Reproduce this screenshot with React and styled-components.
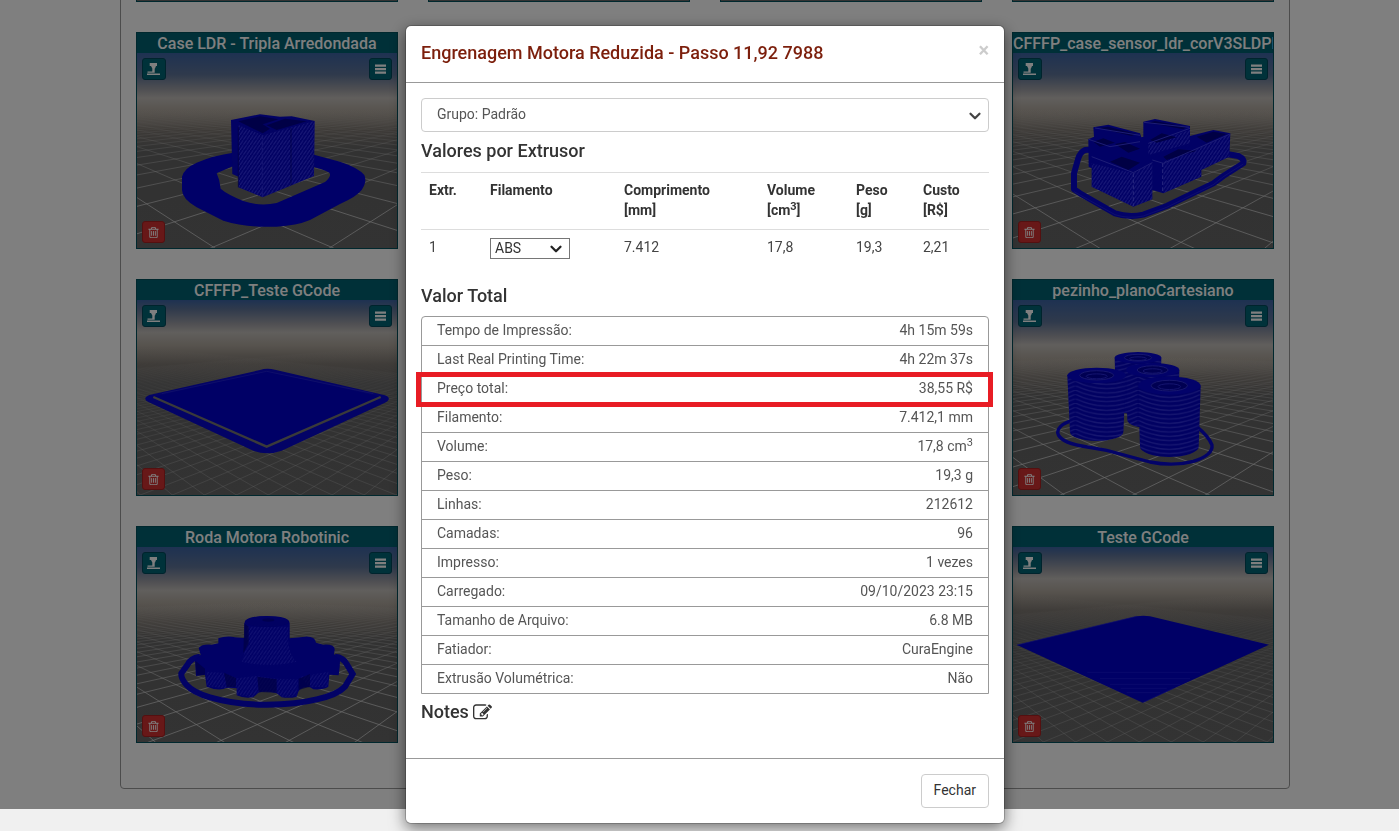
import React from "react";
import styled, { createGlobalStyle } from "styled-components";
import { ChevronDown } from "lucide-react";

const GlobalStyle = createGlobalStyle`
  *, *::before, *::after { box-sizing: border-box; }
  html, body { margin: 0; background: #f0f0f0; }
  body {
    font-family: Roboto, "Liberation Sans", sans-serif;
    font-size: 14px;
    line-height: 20px;
    color: #333;
    overflow: hidden;
  }
`;

/* ---------- library page ---------- */

const Library = styled.main`
  display: flex;
  flex-direction: column;
  justify-content: flex-end;
  align-items: center;
  height: calc(100vh - 22px);
  padding: 0 0 20px 11px;
  overflow: hidden;
  background: #fff;
`;

const Panel = styled.section`
  width: 100%;
  max-width: 1170px;
  padding: 0 15px 45px;
  border: 1px solid #999;
  border-radius: 4px;
`;

const CardGrid = styled.div`
  display: grid;
  grid-template-columns: repeat(4, 1fr);
  gap: 30px;
`;

const Card = styled.article`
  position: relative;
  grid-column: ${(p) => p.$column};
  display: flex;
  flex-direction: column;
  height: 217px;
  overflow: hidden;
  border: 1px solid #00505c;
  background: #666;
`;

const CardTitle = styled.h3`
  flex: none;
  margin: 0;
  height: 20px;
  overflow: hidden;
  background: #006070;
  color: #fff;
  font-size: 16px;
  font-weight: 500;
  line-height: 22px;
  text-align: center;
  white-space: nowrap;
`;

const SceneSvg = styled.svg`
  display: block;
  flex: 1;
  width: 100%;
  min-height: 0;
`;

const CardButton = styled.button`
  position: absolute;
  display: flex;
  align-items: center;
  justify-content: center;
  width: ${(p) => (p.$wide ? 24 : 23)}px;
  height: 22px;
  padding: 0;
  border: 1px solid ${(p) => (p.$danger ? "#a82020" : "#00485a")};
  border-radius: 3px;
  background: ${(p) => (p.$danger ? "#d03030" : "#006474")};
  color: #fff;
  ${(p) => (p.$bottom ? "bottom: 5px;" : "top: 25px;")}
  ${(p) => (p.$right ? "right: 5px;" : "left: 5px;")}
`;

const PrinterIcon = () => (
  <svg width="14" height="14" viewBox="0 0 14 14" fill="currentColor" aria-hidden="true">
    <path d="M2.700 1H10V4H9L8 6.500H7.700V10.800H0.500V9.500H5.300V6.500L4 4H2.700ZM0 11.400H13V13H0Z" />
  </svg>
);

const BarsIcon = () => (
  <svg width="13" height="12" viewBox="0 0 13 12" fill="currentColor" aria-hidden="true">
    <path d="M1 1.500h11v2.200H1zM1 5h11v2.200H1zM1 8.500h11v2.200H1z" />
  </svg>
);

const TrashIcon = () => (
  <svg width="13" height="13" viewBox="0 0 1792 1792" fill="currentColor" aria-hidden="true">
    <path d="M704 736v576q0 14-9 23t-23 9h-64q-14 0-23-9t-9-23v-576q0-14 9-23t23-9h64q14 0 23 9t9 23zm256 0v576q0 14-9 23t-23 9h-64q-14 0-23-9t-9-23v-576q0-14 9-23t23-9h64q14 0 23 9t9 23zm256 0v576q0 14-9 23t-23 9h-64q-14 0-23-9t-9-23v-576q0-14 9-23t23-9h64q14 0 23 9t9 23zm128 724v-948h-896v948q0 22 7 40.500t14.500 27 10.500 8.500h832q3 0 10.500-8.500t14.500-27 7-40.500zm-672-1076h448l-48-117q-7-9-17-11h-317q-10 2-17 11zm928 32v64q0 14-9 23t-23 9h-96v948q0 83-47 143.500t-113 60.500h-832q-66 0-113-58.500t-47-141.500v-952h-96q-14 0-23-9t-9-23v-64q0-14 9-23t23-9h309l70-167q15-37 54-63t79-26h320q40 0 79 26t54 63l70 167h309q14 0 23 9t9 23z" />
  </svg>
);

const EditIcon = () => (
  <svg width="19" height="19" viewBox="0 0 1792 1792" fill="currentColor" aria-hidden="true">
    <path d="M888 1184l116-116-152-152-116 116v56h96v96h56zm440-720q-16-16-33 1l-350 350q-17 17-1 33t33-1l350-350q17-17 1-33zm80 594v190q0 119-84.500 203.500t-203.500 84.500h-832q-119 0-203.500-84.500t-84.500-203.500v-832q0-119 84.500-203.500t203.500-84.500h832q63 0 117 25 15 7 18 23 3 17-9 29l-49 49q-14 14-32 8-23-6-45-6h-832q-66 0-113 47t-47 113v832q0 66 47 113t113 47h832q66 0 113-47t47-113v-126q0-13 9-22l64-64q15-15 35-7t20 29zm-96-738l288 288-672 672h-288v-288zm444 132l-92 92-288-288 92-92q28-28 68-28t68 28l152 152q28 28 28 68t-28 68z" />
  </svg>
);

/* Print bed: sky gradient and a grid running to two vanishing points. */
function Scene({ id, horizon = 130, step = 300, anchor = 0, base = 585, children }) {
  const fine = step < 150;
  const lines = [];
  for (let k = -45; k <= 45; k += 1) {
    const x = anchor + k * step;
    [-470, 1290].forEach((vx) => {
      const far = 1.8;
      lines.push(`M${vx} ${horizon}L${vx + (x - vx) * far} ${horizon + (base - horizon) * far}`);
    });
  }
  const at = (px) => (horizon + px) / 585;
  return (
    <SceneSvg viewBox="0 0 780 585" preserveAspectRatio="xMidYMid slice" role="img" aria-label="Modelo">
      <defs>
        <linearGradient id={`${id}-sky`} x1="0" y1="0" x2="0" y2="1">
          <stop offset="0" stopColor="#3c64a4" />
          <stop offset={at(-65)} stopColor="#5f7498" />
          <stop offset={at(-20)} stopColor="#a0a0a6" />
          <stop offset={at(5)} stopColor="#c2beba" />
          <stop offset={at(45)} stopColor="#aea69c" />
          <stop offset={at(100)} stopColor="#7c7670" />
          <stop offset={at(160)} stopColor="#646464" />
          <stop offset="1" stopColor="#666" />
        </linearGradient>
        <linearGradient id={`${id}-fade`} gradientUnits="userSpaceOnUse" x1="0" y1={horizon} x2="0" y2="585">
          <stop offset="0.08" stopColor="#c8c4c0" stopOpacity="0" />
          <stop offset="0.35" stopColor="#d0d0d0" stopOpacity={fine ? 0.14 : 0.3} />
          <stop offset="0.75" stopColor="#d8d8d8" stopOpacity={fine ? 0.4 : 0.7} />
        </linearGradient>
        <pattern id={`${id}-diag`} width="10" height="15" patternUnits="userSpaceOnUse">
          <path d="M0 15L10 0" stroke="#4848ff" strokeWidth="3" />
        </pattern>
        <pattern id={`${id}-wave`} width="188" height="13" x="414" patternUnits="userSpaceOnUse">
          <path
            d="M0 -26Q94 18 188 -26M0 -13Q94 31 188 -13M0 0Q94 44 188 0M0 -39Q94 5 188 -39"
            stroke="#4a4af4"
            strokeWidth="4"
            fill="none"
          />
        </pattern>
      </defs>
      <rect width="780" height="585" fill={`url(#${id}-sky)`} />
      <path d={lines.join("")} stroke={`url(#${id}-fade)`} strokeWidth={fine ? 2 : 3} fill="none" />
      {children}
    </SceneSvg>
  );
}

const BoxScene = () => (
  <Scene id="box" horizon={130} step={353} anchor={229} base={582}>
    <g transform="translate(-81 -159)">
      <path
        fill="#0000d0"
        fillRule="evenodd"
        d="M216 530Q222 505 260 488Q310 466 370 458L612 464L690 485Q745 503 763 525Q772 545 755 570Q740 590 690 612L600 660Q560 677 500 680H450Q390 678 340 662L260 622Q216 596 216 570ZM320 520L370 498H600Q640 508 658 518Q666 528 645 546L500 609Q450 620 400 603Q350 582 332 566Q330 540 320 520Z"
      />
      <path fill="#0404c8" d="M363 360L450 343L510 350L545 349L614 363L612 528L458 592L385 562V530L367 522Z" />
      <path fill="url(#box-diag)" opacity=".7" d="M385 375L458 406L614 363L612 528L458 592L385 562Z" />
      <path fill="#00008c" d="M385 364L450 349L505 358L458 373L480 386L458 400ZM470 376L525 356L590 364L500 390Z" />
      <path stroke="#2c2ce8" strokeWidth="3" strokeDasharray="12 7" d="M457 406V590" />
      <path stroke="#000080" strokeWidth="2" d="M543 384V555M385 380V562" />
    </g>
  </Scene>
);

const BlocksScene = () => (
  <Scene id="blocks" horizon={130} step={272} anchor={232} base={568}>
    <g transform="translate(-39 -159)">
      <path
        fill="none"
        stroke="#0505d0"
        strokeWidth="18"
        strokeLinejoin="round"
        d="M290 448L255 450Q240 456 234 478L222 520V568L240 580L345 640Q385 653 430 644L500 618L640 550L670 528L730 490Q735 478 715 468L680 462"
      />
      <path fill="none" stroke="#4040f0" strokeWidth="2" opacity=".6" d="M222 575L345 644Q385 657 430 648L500 622L640 554L670 530L730 492" />
      <path
        fill="#0303cc"
        d="M280 382L325 374L420 400L424 412L430 410V365L465 357L570 378V408L640 390L691 400L688 470L604 510V530L490 580L457 570V598L400 620L275 560V505L266 500L265 418L282 410Z"
      />
      <path fill="url(#blocks-diag)" opacity=".7" d="M400 520L457 490V598L400 620ZM490 485L604 440V530L490 580ZM275 490L400 520V620L275 560ZM604 440L690 402L688 470L604 510ZM445 430L570 390V430L445 465Z" />
      <path fill="#000088" d="M295 384L325 380L410 402L395 408ZM445 368L465 363L560 380L550 388ZM590 410L640 395L680 402L620 428ZM345 432L375 426L420 446L385 458ZM280 425L310 415L345 428L300 440ZM330 485L365 470L420 488L385 510ZM450 420L485 400L530 412L470 428ZM490 470L535 448L590 452L500 480Z" />
      <path stroke="#3a3aee" strokeWidth="3" fill="none" d="M266 418L330 440L420 425M275 470L400 518L457 488M445 430L570 385M457 480L490 490L690 402M285 384L420 406M432 367L568 382" />
      <path stroke="#5050ff" strokeWidth="3" strokeDasharray="11 7" d="M400 520V618M488 490V578" />
    </g>
  </Scene>
);

const PlateScene = () => (
  <Scene id="plate" horizon={92} step={96} anchor={10}>
    <g transform="translate(-81 -120)">
      <path fill="#0606cc" d="M450 330Q470 323 495 329L825 406Q848 415 825 428L515 572Q470 588 430 572L115 426Q95 415 118 405Z" />
      <path fill="#0000cc" d="M470 333L810 410L470 556L132 410Z" />
      <path fill="none" stroke="#747474" strokeWidth="7" d="M130 411L470 560L812 411" />
      <path fill="none" stroke="#2828da" strokeWidth="2" d="M155 401L470 334L790 401" />
    </g>
  </Scene>
);

const CylinderShape = ({ x, y, rx, ry, height, lean = 4 }) => {
  const body = `M${x - rx} ${y}L${x - rx + lean} ${y + height}A${rx - lean} ${ry + 4} 0 0 0 ${x + rx - lean} ${y + height}L${x + rx} ${y}Z`;
  return (
    <g>
      <path d={body} fill="#0202c4" />
      <path d={body} fill="url(#feet-wave)" opacity=".6" />
      <ellipse cx={x} cy={y} rx={rx} ry={ry} fill="#0404d4" />
      <ellipse cx={x} cy={y} rx={rx * 0.58} ry={ry * 0.6} fill="#0000a4" stroke="#3030e0" strokeWidth="3" />
      <ellipse cx={x} cy={y + 3} rx={rx * 0.36} ry={ry * 0.32} fill="none" stroke="#2a2ae0" strokeWidth="3" />
    </g>
  );
};

const FeetScene = () => (
  <Scene id="feet" horizon={130} step={216} anchor={150} base={582}>
    <g transform="translate(-39 -120)">
      <path fill="none" stroke="#0606d0" strokeWidth="10" d="M230 478Q175 490 173 518Q178 546 245 558L320 571L450 606Q520 620 580 604Q640 585 636 555Q625 528 590 500" />
      <CylinderShape x={414} y={293} rx={70} ry={17} height={150} />
      <CylinderShape x={458} y={330} rx={80} ry={21} height={150} />
      <CylinderShape x={290} y={346} rx={88} ry={23} height={170} lean={8} />
      <CylinderShape x={508} y={377} rx={94} ry={27} height={183} lean={6} />
    </g>
  </Scene>
);

const GearScene = () => (
  <Scene id="gear" horizon={125} step={204} anchor={49} base={580}>
    <g transform="translate(-81 -111)">
      <path
        fill="none"
        stroke="#0404cc"
        strokeWidth="18"
        d="M270 440Q240 445 232 465L214 490Q212 505 230 525Q250 548 300 562Q380 585 470 584Q560 583 620 568Q680 556 705 530L728 492L710 462Q700 442 675 440"
      />
      <path
        fill="#0202cc"
        d="M403 340Q405 318 471 318Q537 318 539 340V385L585 380Q615 378 618 398L640 404Q676 402 674 420L672 432L690 452Q690 470 686 496L658 494L655 530Q640 540 610 538L600 532Q575 528 565 545L560 560Q540 566 515 562L500 550Q470 540 445 548L430 562Q400 566 380 556V535Q350 530 340 537Q320 542 290 530L285 494L258 498L255 450L272 434L266 414Q275 402 305 404L325 400V385Q350 376 375 382L403 384Z"
      />
      <path fill="url(#gear-diag)" opacity=".45" d="M410 350H535V400Q540 440 560 455Q470 475 395 455Q408 420 410 395ZM290 486L340 488L380 505V530L340 535L290 528ZM380 505L440 498L500 506L565 508L560 558L515 562L500 548L445 546L430 562L380 554ZM570 500L655 485V530L600 532Z" />
      <path fill="#000084" opacity=".7" d="M342 488L378 504V530L350 532ZM442 500L500 508V548L446 546ZM566 506L600 492V530L566 540ZM256 452L285 476V494L260 496ZM403 340L416 350V400L400 430Z" />
      <ellipse cx="471" cy="335" rx="66" ry="16" fill="#0202c4" />
      <ellipse cx="475" cy="330" rx="18" ry="5" fill="#0000a0" />
    </g>
  </Scene>
);

const SquareScene = () => (
  <Scene id="square" horizon={90} step={96} anchor={-5}>
    <g transform="translate(-39 -111)">
      <path fill="#0000cc" d="M410 319Q430 315 450 319L807 404L428 578L51 405Z" />
      <path stroke="#1c1cde" strokeWidth="2" fill="none" d="M262 487H600M300 506H570M330 523H540M362 535H500M380 548H480M51 405L410 319M430 577L520 535" />
    </g>
  </Scene>
);

const models = [
  { title: "Case LDR - Tripla Arredondada", column: 1, View: BoxScene },
  { title: "CFFFP_case_sensor_ldr_corV3SLDPRT", column: 4, View: BlocksScene },
  { title: "CFFFP_Teste GCode", column: 1, View: PlateScene },
  { title: "pezinho_planoCartesiano", column: 4, View: FeetScene },
  { title: "Roda Motora Robotinic", column: 1, View: GearScene },
  { title: "Teste GCode", column: 4, View: SquareScene },
];

const ModelCard = ({ title, column, View }) => (
  <Card $column={column}>
    <CardTitle>{title}</CardTitle>
    <View />
    <CardButton type="button" $wide aria-label="Imprimir"><PrinterIcon /></CardButton>
    <CardButton type="button" $right aria-label="Menu"><BarsIcon /></CardButton>
    <CardButton type="button" $danger $bottom aria-label="Excluir"><TrashIcon /></CardButton>
  </Card>
);

/* ---------- modal ---------- */

const Backdrop = styled.div`
  position: fixed;
  inset: 0 0 22px;
  background: rgba(0, 0, 0, 0.5);
`;

const ModalLayer = styled.div`
  position: fixed;
  inset: 0;
  display: flex;
  justify-content: center;
  align-items: flex-start;
  padding: 25px 0 0 11px;
`;

const Dialog = styled.div`
  width: 100%;
  max-width: 600px;
  border: 1px solid rgba(0, 0, 0, 0.2);
  border-radius: 6px;
  background: #fff;
  background-clip: padding-box;
  box-shadow: 0 5px 15px rgba(0, 0, 0, 0.5);
`;

const DialogHeader = styled.header`
  display: flex;
  justify-content: space-between;
  align-items: flex-start;
  padding: 15px 15px 17px;
  border-bottom: 1px solid #999;
`;

const DialogTitle = styled.h2`
  margin: 0;
  color: #7c1f0c;
  font-size: 18px;
  font-weight: 500;
  line-height: 24px;
`;

const CloseButton = styled.button`
  padding: 0;
  border: 0;
  background: none;
  color: #ccc;
  font: 700 20px/18px Roboto, sans-serif;
`;

const DialogBody = styled.div`
  padding: 15px 15px 25px;
`;

const SectionTitle = styled.h3`
  display: flex;
  align-items: center;
  gap: 4px;
  margin: ${(p) => p.$top || 8}px 0 ${(p) => p.$bottom || 10}px;
  color: #333;
  font-size: 18px;
  font-weight: 500;
  line-height: 22px;
`;

const SelectBox = styled.div`
  position: relative;
  width: ${(p) => (p.$small ? "80px" : "100%")};

  svg {
    position: absolute;
    top: 50%;
    right: 5px;
    margin-top: ${(p) => (p.$small ? -9 : -8)}px;
    pointer-events: none;
  }
`;

const SelectInput = styled.select`
  display: block;
  appearance: none;
  width: 100%;
  height: ${(p) => (p.$small ? 21 : 34)}px;
  padding: ${(p) => (p.$small ? "0 4px 2px" : "0 15px 2px")};
  border: 1px solid ${(p) => (p.$small ? "#767676" : "#ccc")};
  border-radius: ${(p) => (p.$small ? 0 : 4)}px;
  background: #fff;
  color: ${(p) => (p.$small ? "#333" : "#555")};
  font: 400 14px/18px Roboto, sans-serif;
`;

const ExtruderTable = styled.table`
  width: 100%;
  border-collapse: collapse;
  table-layout: fixed;

  th, td {
    padding: 7px 8px 9px;
    border-top: 1px solid #ddd;
    text-align: left;
    vertical-align: top;
  }
  th { font-weight: 700; }
  td { color: #444; }
  td > div { margin-top: 1px; }
  sup { font-size: 11px; line-height: 0; vertical-align: 5px; }
`;

const Totals = styled.dl`
  margin: 0;
  border: 1px solid #999;
  border-radius: 4px 4px 0 0;
`;

const TotalRow = styled.div`
  position: relative;
  z-index: ${(p) => (p.$marked ? 1 : 0)};
  display: flex;
  justify-content: space-between;
  padding: 3px 15px 5px;
  color: #555;

  &:not(:first-child) { border-top: 1px solid #999; }

  dt, dd { margin: 0; }
  sup { font-size: 11px; line-height: 0; vertical-align: 5px; }
`;

const Highlight = styled.span`
  position: absolute;
  inset: -3px -5px -4px -6px;
  border: 5px solid #e81c24;
  pointer-events: none;
`;

const DialogFooter = styled.footer`
  display: flex;
  justify-content: flex-end;
  padding: 15px;
  border-top: 1px solid #999;
`;

const FooterButton = styled.button`
  height: 34px;
  padding: 0 12px 2px;
  border: 1px solid #ccc;
  border-radius: 4px;
  background: #fff;
  color: #333;
  font: 400 14px/20px Roboto, sans-serif;
`;

const totals = [
  ["Tempo de Impressão:", "4h 15m 59s"],
  ["Last Real Printing Time:", "4h 22m 37s"],
  ["Preço total:", "38,55 R$", true],
  ["Filamento:", "7.412,1 mm"],
  ["Volume:", <>17,8 cm<sup>3</sup></>],
  ["Peso:", "19,3 g"],
  ["Linhas:", "212612"],
  ["Camadas:", "96"],
  ["Impresso:", "1 vezes"],
  ["Carregado:", "09/10/2023 23:15"],
  ["Tamanho de Arquivo:", "6.8 MB"],
  ["Fatiador:", "CuraEngine"],
  ["Extrusão Volumétrica:", "Não"],
];

export default function App() {
  return (
    <>
      <GlobalStyle />
      <Library>
        <Panel>
          <CardGrid>
            {[1, 2, 3, 4].map((column) => (
              <Card key={column} $column={column} />
            ))}
            {models.map((model) => (
              <ModelCard key={model.title} {...model} />
            ))}
          </CardGrid>
        </Panel>
      </Library>
      <Backdrop />
      <ModalLayer>
        <Dialog role="dialog" aria-modal="true" aria-labelledby="dialog-title">
          <DialogHeader>
            <DialogTitle id="dialog-title">Engrenagem Motora Reduzida - Passo 11,92 7988</DialogTitle>
            <CloseButton type="button" aria-label="Fechar janela">×</CloseButton>
          </DialogHeader>
          <DialogBody>
            <SelectBox>
              <SelectInput aria-label="Grupo" defaultValue="padrao">
                <option value="padrao">Grupo: Padrão</option>
              </SelectInput>
              <ChevronDown size={18} strokeWidth={3} color="#444" />
            </SelectBox>
            <SectionTitle>Valores por Extrusor</SectionTitle>
            <ExtruderTable>
              <colgroup>
                <col width="61" />
                <col width="134" />
                <col width="143" />
                <col width="89" />
                <col width="67" />
                <col />
              </colgroup>
              <thead>
                <tr>
                  <th>Extr.</th>
                  <th>Filamento</th>
                  <th>Comprimento<br />[mm]</th>
                  <th>Volume<br />[cm<sup>3</sup>]</th>
                  <th>Peso<br />[g]</th>
                  <th>Custo<br />[R$]</th>
                </tr>
              </thead>
              <tbody>
                <tr>
                  <td>1</td>
                  <td>
                    <SelectBox $small>
                      <SelectInput $small aria-label="Filamento" defaultValue="abs">
                        <option value="abs">ABS</option>
                      </SelectInput>
                      <ChevronDown size={18} strokeWidth={3} color="#222" />
                    </SelectBox>
                  </td>
                  <td>7.412</td>
                  <td>17,8</td>
                  <td>19,3</td>
                  <td>2,21</td>
                </tr>
              </tbody>
            </ExtruderTable>
            <SectionTitle $top={17} $bottom={9}>Valor Total</SectionTitle>
            <Totals>
              {totals.map(([label, value, marked]) => (
                <TotalRow key={label} $marked={marked}>
                  <dt>{label}</dt>
                  <dd>{value}</dd>
                  {marked && <Highlight />}
                </TotalRow>
              ))}
            </Totals>
            <SectionTitle $top={7}>
              Notes <EditIcon />
            </SectionTitle>
          </DialogBody>
          <DialogFooter>
            <FooterButton type="button">Fechar</FooterButton>
          </DialogFooter>
        </Dialog>
      </ModalLayer>
    </>
  );
}
